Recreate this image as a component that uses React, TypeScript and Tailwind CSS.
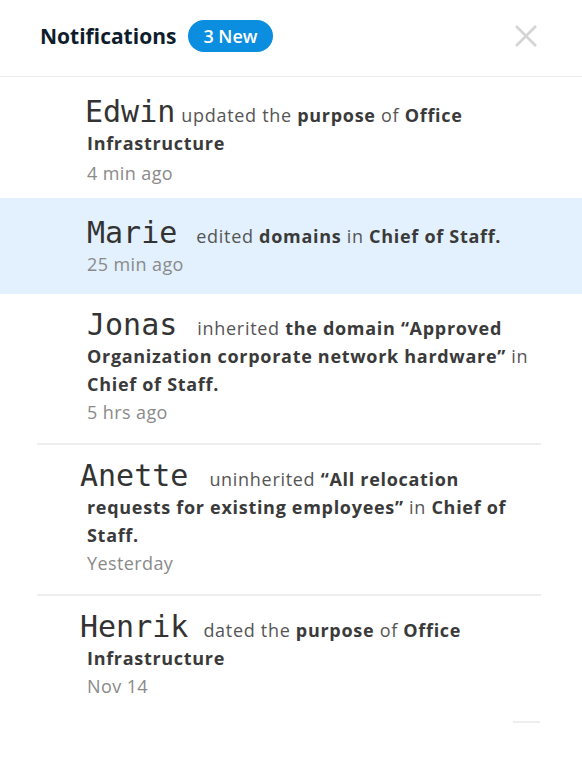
import React from "react";

const body = { fontFamily: "'Open Sans', 'Noto Sans', sans-serif" };
const mono = { fontFamily: "'DejaVu Sans Mono', monospace" };

type Item = {
  name: string;
  nameClass: string;
  rest: React.ReactNode;
  time: string;
  pad: string;
  timeGap: string;
  highlight?: boolean;
  divider?: boolean;
};

const B = ({ children }: { children: React.ReactNode }) => (
  <span className="font-bold text-[#3a3a3a]">{children}</span>
);

const items: Item[] = [
  {
    name: "Edwin",
    nameClass: "ml-[-2px] mr-[6px]",
    rest: (
      <>
        updated the <B>purpose</B> of <B>Office Infrastructure</B>
      </>
    ),
    time: "4 min ago",
    pad: "pt-[24px] pb-[11px]",
    timeGap: "mt-[2px]",
  },
  {
    name: "Marie",
    nameClass: "mr-[19px]",
    rest: (
      <>
        edited <B>domains</B> in <B>Chief of Staff.</B>
      </>
    ),
    time: "25 min ago",
    pad: "pt-[24px] pb-[16px]",
    timeGap: "mt-0",
    highlight: true,
  },
  {
    name: "Jonas",
    nameClass: "mr-[20px]",
    rest: (
      <>
        inherited <B>the domain “Approved Organization corporate network hardware”</B> in{" "}
        <B>Chief of Staff.</B>
      </>
    ),
    time: "5 hrs ago",
    pad: "pt-[20px] pb-[17px]",
    timeGap: "mt-0",
    divider: true,
  },
  {
    name: "Anette",
    nameClass: "ml-[-7px] mr-[21px]",
    rest: (
      <>
        uninherited <B>“All relocation requests for existing employees”</B> in{" "}
        <B>Chief of Staff.</B>
      </>
    ),
    time: "Yesterday",
    pad: "pt-[20px] pb-[17px]",
    timeGap: "mt-0",
    divider: true,
  },
  {
    name: "Henrik",
    nameClass: "ml-[-7px] mr-[15px]",
    rest: (
      <>
        dated the <B>purpose</B> of <B>Office Infrastructure</B>
      </>
    ),
    time: "Nov 14",
    pad: "pt-[20px] pb-[17px]",
    timeGap: "mt-0",
  },
];

export default function App() {
  return (
    <div className="w-[582px] h-[773px] bg-white overflow-hidden" style={body}>
      <div className="h-[77px] flex items-center pb-[4px] pl-[40px] pr-[44px] border-b border-[#ececec]">
        <h1 className="text-[21px] font-bold text-[#0e1d2c] leading-none">Notifications</h1>
        <span className="ml-[12px] h-[32px] px-[15px] rounded-full bg-[#0b8de0] text-white text-[18px] font-semibold flex items-center">
          3 New
        </span>
        <div className="flex-1" />
        <svg width="24" height="24" viewBox="0 0 24 24">
          <path d="M2 2 L22 22 M22 2 L2 22" stroke="#d4d4d4" strokeWidth="2.6" strokeLinecap="butt" />
        </svg>
      </div>
      <div className="flex flex-col">
        {items.map((it, i) => (
          <div key={i} className={it.highlight ? "bg-[#e2f1fd]" : ""}>
            <div className={`pl-[87px] pr-[50px] ${it.pad}`}>
              <p className="text-[18px] leading-[28px] text-[#555] tracking-[0.7px]">
                <span
                  className={`text-[30px] leading-[0] tracking-normal text-[#333] ${it.nameClass}`}
                  style={mono}
                >
                  {it.name}
                </span>
                {it.rest}
              </p>
              <div
                className={`text-[18px] leading-[28px] text-[#8a8a8a] tracking-[0.4px] ${it.timeGap}`}
              >
                {it.time}
              </div>
            </div>
            {it.divider && <div className="mx-[37px] w-[504px] h-[2px] bg-[#eeeeee]" />}
          </div>
        ))}
        <div className="flex justify-end pr-[42px] mt-[4px]">
          <div className="w-[27px] h-[2px] bg-[#eeeeee]" />
        </div>
      </div>
    </div>
  );
}
